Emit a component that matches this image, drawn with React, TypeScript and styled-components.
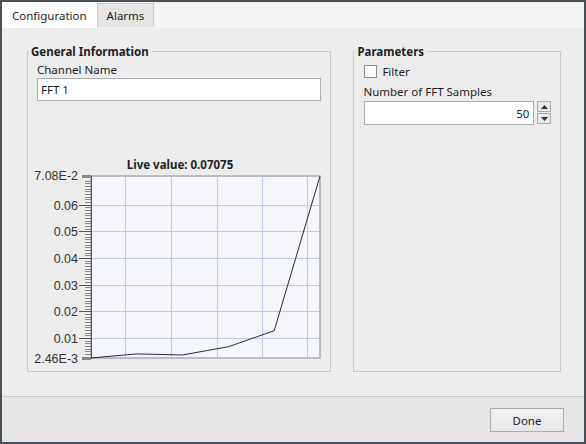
import React from 'react';
import styled, {createGlobalStyle} from 'styled-components';

const GlobalStyle = createGlobalStyle`
  html, body {
    margin: 0;
    padding: 0;
    background: #ffffff;
  }
  body {
    font-family: "Noto Sans", "Open Sans", sans-serif;
    font-size: 11.5px;
    color: #1e1e1e;
  }
  * {
    box-sizing: border-box;
  }
`;

const samples = [0.00246, 0.0040, 0.0036, 0.0067, 0.0127, 0.07075];
const yMax = 0.0708;
const yMin = 0.00246;

export default function App() {
    return (
        <>
            <GlobalStyle/>
            <Frame>
                <TabBar>
                    <Tab $active>Configuration</Tab>
                    <Tab>Alarms</Tab>
                </TabBar>

                <Content>
                    <GroupBox $width={305}>
                        <Legend>General Information</Legend>
                        <FieldLabel>Channel Name</FieldLabel>
                        <TextInput defaultValue="FFT 1"/>
                        <LiveChart/>
                    </GroupBox>

                    <GroupBox $width={208}>
                        <Legend>Parameters</Legend>
                        <CheckRow>
                            <CheckBox/>
                            <span>Filter</span>
                        </CheckRow>
                        <FieldLabel $gap={1}>Number of FFT Samples</FieldLabel>
                        <SpinRow>
                            <SpinInput defaultValue="50"/>
                            <SpinButtons>
                                <SpinButton>
                                    <svg width="7" height="4" viewBox="0 0 7 4"><path d="M0 4 L3.5 0 L7 4 Z" fill="#333"/></svg>
                                </SpinButton>
                                <SpinButton>
                                    <svg width="7" height="4" viewBox="0 0 7 4"><path d="M0 0 L3.5 4 L7 0 Z" fill="#333"/></svg>
                                </SpinButton>
                            </SpinButtons>
                        </SpinRow>
                    </GroupBox>
                </Content>

                <Footer>
                    <Button>Done</Button>
                </Footer>
            </Frame>
        </>
    );
}

const LiveChart = () => {
    const left = 63, right = 292, top = 21, bottom = 203;
    const yFor = (v: number) => top + (yMax - v) / (yMax - yMin) * (bottom - top);
    const xFor = (i: number) => left + i * (right - left) / (samples.length - 1);

    const majors = [0.06, 0.05, 0.04, 0.03, 0.02, 0.01];
    const minors: number[] = [];
    for (let k = 3; k <= 70; k++) {
        if (k % 10 !== 0) minors.push(k / 1000);
    }
    const vLines = [97, 143, 189, 234, 279];
    const points = samples.map((v, i) => `${xFor(i)},${yFor(v)}`).join(' ');

    return (
        <ChartSvg width="294" height="210" viewBox="0 0 294 210">
            <text x="152" y="14" textAnchor="middle" fontFamily="Noto Sans, sans-serif" fontWeight="bold" fontSize="11.5" fill="#222">
                Live value: 0.07075
            </text>
            <rect x={left} y={top} width={right - left} height={bottom - top} fill="#f5f6fb" stroke="#a9a9b4"/>
            {vLines.map(x => <line key={x} x1={x + 0.5} x2={x + 0.5} y1={top} y2={bottom} stroke="#c6c6ea"/>)}
            {majors.map(v => <line key={v} x1={left} x2={right} y1={Math.round(yFor(v)) + 0.5} y2={Math.round(yFor(v)) + 0.5} stroke="#c6c6ea"/>)}
            <rect x={left} y={top} width={right - left} height={bottom - top} fill="none" stroke="#a9a9b4"/>
            <line x1={left + 0.5} x2={left + 0.5} y1={top} y2={bottom + 1} stroke="#555"/>
            {minors.map(v => <line key={v} x1={57} x2={left} y1={Math.round(yFor(v)) + 0.5} y2={Math.round(yFor(v)) + 0.5} stroke="#888"/>)}
            {majors.map(v => <line key={'m' + v} x1={51} x2={left} y1={Math.round(yFor(v)) + 0.5} y2={Math.round(yFor(v)) + 0.5} stroke="#555"/>)}
            <rect x={54} y={top - 1} width={9} height={3} fill="#8a8a8a"/>
            <rect x={54} y={bottom - 1} width={9} height={3} fill="#8a8a8a"/>
            <g fontFamily="Liberation Sans, Arial, sans-serif" fontSize="12.5" fill="#333" textAnchor="end">
                <text x="50" y={top + 4}>7.08E-2</text>
                {majors.map(v => <text key={'t' + v} x="50" y={Math.round(yFor(v)) + 5}>{v.toFixed(2)}</text>)}
                <text x="50" y={bottom + 5}>2.46E-3</text>
            </g>
            <polyline points={points} fill="none" stroke="#2a2a3a" strokeWidth="1"/>
        </ChartSvg>
    );
};

const Frame = styled.div`
  width: 586px;
  height: 444px;
  border: 2px solid #4b5057;
  display: flex;
  flex-direction: column;
  background: #ececec;
`

const TabBar = styled.div`
  height: 26px;
  display: flex;
  align-items: flex-start;
  background: #f4f4f4;
`

const Tab = styled.div<{ $active?: boolean }>`
  height: ${p => p.$active ? '26px' : '24px'};
  margin-top: ${p => p.$active ? '0' : '1px'};
  display: flex;
  align-items: center;
  padding: 0 ${p => p.$active ? '10px' : '9px'};
  background: ${p => p.$active ? '#ffffff' : '#e5e5e5'};
  border: ${p => p.$active ? 'none' : '1px solid #cacaca'};
  border-bottom: none;
  color: #1e1e1e;
`

const Content = styled.div`
  flex: 1;
  display: flex;
  gap: 22px;
  padding: 16px 23px 24px 25px;
  border-bottom: 1px solid #c9c9c9;
`

const GroupBox = styled.fieldset<{ $width: number }>`
  width: ${p => p.$width}px;
  margin: 0;
  padding: 3px 10px 0 9px;
  border: 1px solid #c8c8c8;
  display: flex;
  flex-direction: column;
  min-width: 0;
`

const Legend = styled.legend`
  margin-left: -8px;
  padding: 0 3px 0 2px;
  font-weight: bold;
  color: #1e1e1e;
`

const FieldLabel = styled.div<{ $gap?: number }>`
  height: 16px;
  line-height: 16px;
  margin-bottom: ${p => p.$gap ?? 0}px;
`

const TextInput = styled.input`
  width: 284px;
  height: 23px;
  border: 1px solid #abadb3;
  background: #ffffff;
  font: inherit;
  color: #1e1e1e;
  padding: 0 3px;
  outline: none;
`

const ChartSvg = styled.svg`
  display: block;
  margin-top: 54px;
  margin-left: -9px;
`

const CheckRow = styled.div`
  display: flex;
  align-items: center;
  gap: 5px;
  height: 17px;
  margin: 1px 0 4px 1px;
`

const CheckBox = styled.span`
  width: 13px;
  height: 13px;
  border: 1px solid #8f8f8f;
  background: #ffffff;
`

const SpinRow = styled.div`
  display: flex;
  gap: 3px;
  margin-left: 1px;
`

const SpinInput = styled.input`
  width: 170px;
  height: 24px;
  border: 1px solid #abadb3;
  background: #ffffff;
  font: inherit;
  color: #1e1e1e;
  text-align: right;
  padding: 0 4px;
  outline: none;
`

const SpinButtons = styled.div`
  display: flex;
  flex-direction: column;
  gap: 1px;
`

const SpinButton = styled.div`
  width: 14px;
  height: 11px;
  border: 1px solid #acacac;
  background: #e9e9e9;
  display: flex;
  align-items: center;
  justify-content: center;
`

const Footer = styled.div`
  height: 45px;
  display: flex;
  justify-content: flex-end;
  align-items: flex-start;
  padding: 11px 20px 0 0;
  background: #e6e6e6;
`

const Button = styled.button`
  width: 74px;
  height: 24px;
  border: 1px solid #adadad;
  background: linear-gradient(#f0f0f0, #e5e5e5);
  font: inherit;
  color: #1e1e1e;
  padding: 0;
`
